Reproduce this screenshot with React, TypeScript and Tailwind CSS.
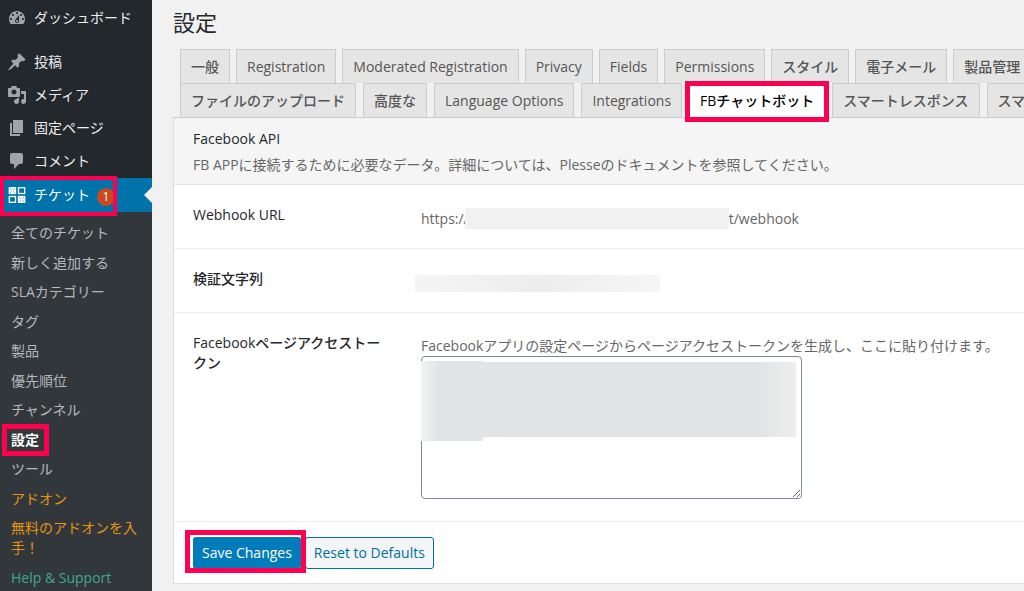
import type { ReactNode } from 'react'

const ICONS = {
  dashboard:
    'M3.76 16h12.48c1.1-1.37 1.76-3.11 1.76-5 0-4.42-3.58-8-8-8s-8 3.58-8 8c0 1.89.66 3.63 1.76 5zM10 4c.55 0 1 .45 1 1s-.45 1-1 1-1-.45-1-1 .45-1 1-1zM6 6c.55 0 1 .45 1 1s-.45 1-1 1-1-.45-1-1 .45-1 1-1zm8 0c.55 0 1 .45 1 1s-.45 1-1 1-1-.45-1-1 .45-1 1-1zm-5.37 5.55L12 7v6c0 1.1-.9 2-2 2s-2-.9-2-2c0-.57.24-1.08.63-1.45zM4 10c.55 0 1 .45 1 1s-.45 1-1 1-1-.45-1-1 .45-1 1-1zm12 0c.55 0 1 .45 1 1s-.45 1-1 1-1-.45-1-1 .45-1 1-1zm-5 3c0-.55-.45-1-1-1s-1 .45-1 1 .45 1 1 1 1-.45 1-1z',
  post: 'M10.44 3.02l1.82-1.82 6.36 6.35-1.83 1.82c-1.05-.68-2.48-.57-3.41.36l-.75.75c-.92.93-1.04 2.35-.35 3.41l-1.83 1.82-2.41-2.41-2.8 2.79c-.42.42-3.38 2.71-3.8 2.29s1.86-3.39 2.28-3.81l2.79-2.79L4.1 9.36l1.83-1.82c1.05.69 2.48.57 3.4-.36l.75-.75c.93-.92 1.05-2.35.36-3.41z',
  media:
    'M13 11V4c0-.55-.45-1-1-1h-1.67L9 1H5L3.67 3H2c-.55 0-1 .45-1 1v7c0 .55.45 1 1 1h10c.55 0 1-.45 1-1zM7 4.5c1.38 0 2.5 1.12 2.5 2.5S8.38 9.5 7 9.5 4.5 8.38 4.5 7 5.62 4.5 7 4.5zM14 6h5v10.5c0 1.38-1.12 2.5-2.5 2.5S14 17.88 14 16.5s1.12-2.5 2.5-2.5c.17 0 .34.02.5.05V9h-3V6zm-4 8.05V13h2v3.5c0 1.38-1.12 2.5-2.5 2.5S7 17.88 7 16.5 8.12 14 9.5 14c.17 0 .34.02.5.05z',
  page: 'M6 15V2h10v13H6zm-1 1h8v2H3V5h2v11z',
  comment: 'M5 2h9c1.1 0 2 .9 2 2v7c0 1.1-.9 2-2 2h-2l-5 5v-5H5c-1.1 0-2-.9-2-2V4c0-1.1.9-2 2-2z',
}

const MENU: { label: string; icon: keyof typeof ICONS }[] = [
  { label: '投稿', icon: 'post' },
  { label: 'メディア', icon: 'media' },
  { label: '固定ページ', icon: 'page' },
  { label: 'コメント', icon: 'comment' },
]

const SUBMENU: { label: string; tone?: string; current?: boolean }[] = [
  { label: '全てのチケット' },
  { label: '新しく追加する' },
  { label: 'SLAカテゴリー' },
  { label: 'タグ' },
  { label: '製品' },
  { label: '優先順位' },
  { label: 'チャンネル' },
  { label: '設定', tone: 'text-white font-bold', current: true },
  { label: 'ツール' },
  { label: 'アドオン', tone: 'text-[#e8950c]' },
  { label: '無料のアドオンを入手！', tone: 'text-[#e8950c]' },
  { label: 'Help & Support', tone: 'text-[#42a88c]' },
]

const TAB_ROWS = [
  {
    gap: 'gap-1.5',
    tabs: ['一般', 'Registration', 'Moderated Registration', 'Privacy', 'Fields', 'Permissions', 'スタイル', '電子メール', '製品管理'],
  },
  {
    gap: 'gap-[7px]',
    tabs: ['ファイルのアップロード', '高度な', 'Language Options', 'Integrations', 'FBチャットボット', 'スマートレスポンス', 'スマートリプライ'],
  },
]

const ACTIVE_TAB = 'FBチャットボット'

function MenuIcon({ name }: { name: keyof typeof ICONS }) {
  return (
    <svg viewBox="0 0 20 20" className="size-5 flex-none fill-[#a0a5aa]" aria-hidden="true">
      <path d={ICONS[name]} />
    </svg>
  )
}

function TicketIcon() {
  return (
    <svg viewBox="0 0 20 20" className="size-5 flex-none" fill="none" stroke="#fff" strokeWidth="1.3" aria-hidden="true">
      <rect x="2.3" y="2.7" width="6.2" height="5.8" fill="#fff" />
      <rect x="11.5" y="2.7" width="6.2" height="5.8" />
      <rect x="2.3" y="11.500" width="6.2" height="5.8" />
      <rect x="11.5" y="11.500" width="6.2" height="5.8" fill="#fff" />
      <path
        d="M3.2 3.600l1.300 1.200M7.600 3.600L6.300 4.800M3.200 7.600l1.300-1.200M7.600 7.600L6.300 6.400M12.400 12.400l1.300 1.200M16.800 12.400l-1.300 1.200M12.400 16.400l1.300-1.200M16.800 16.400l-1.300-1.200"
        stroke="#0073aa"
        strokeWidth=".8"
      />
    </svg>
  )
}

function Highlight({ className }: { className: string }) {
  return <span aria-hidden="true" className={`pointer-events-none absolute z-10 border-[#ff0050] ${className}`} />
}

function MenuItem({ label, icon }: { label: string; icon: keyof typeof ICONS }) {
  return (
    <li>
      <a href="#" className="flex h-[33px] items-center gap-[7px] pl-[7px] text-[#eee]">
        <MenuIcon name={icon} />
        {label}
      </a>
    </li>
  )
}

function Sidebar() {
  return (
    <nav className="flex w-[152px] flex-none flex-col bg-[#23282d] pt-px">
      <ul>
        <MenuItem label="ダッシュボード" icon="dashboard" />
      </ul>
      <ul className="mb-px mt-[11px]">
        {MENU.map(item => (
          <MenuItem key={item.label} {...item} />
        ))}
      </ul>
      <div className="relative">
        <a href="#" className="flex h-[34px] items-center gap-[7px] bg-[#0073aa] pl-[7px] text-white">
          <TicketIcon />
          チケット
          <span className="mt-1 flex size-[18px] items-center justify-center rounded-full bg-[#ca4a1f] text-xs">1</span>
        </a>
        <svg viewBox="0 0 8 16" className="absolute right-0 top-[9px] h-4 w-2 fill-[#f1f1f1]" aria-hidden="true">
          <path d="M8 0v16L0 8z" />
        </svg>
        <Highlight className="-top-0.5 left-0 h-10 w-[117px] border-4" />
      </div>
      <ul className="flex flex-1 flex-col justify-between bg-[#32373c] pb-[3px] pl-[11px] pr-2 pt-[11px]">
        {SUBMENU.map(item => (
          <li key={item.label} className="relative">
            <a href="#" className={`block ${item.tone ?? 'text-[#b4b9be]'}`} aria-current={item.current ? 'page' : undefined}>
              {item.label}
            </a>
            {item.current && <Highlight className="-left-[9px] -top-1.5 h-8 w-[47px] border-[5px]" />}
          </li>
        ))}
      </ul>
    </nav>
  )
}

function Tab({ label }: { label: string }) {
  const active = label === ACTIVE_TAB
  return (
    <a
      href="#"
      aria-current={active ? 'page' : undefined}
      className={`relative flex-none whitespace-nowrap border border-b-0 border-[#ccc] px-2.5 pb-1.5 pt-[7px] font-medium leading-5 ${
        active ? 'bg-white text-black' : 'bg-[#e5e5e5] text-[#555]'
      }`}
    >
      {label}
      {active && <Highlight className="-inset-x-[5px] -bottom-[5px] -top-[3px] border-[5px]" />}
    </a>
  )
}

function SettingRow({ label, htmlFor, tall, children }: { label: string; htmlFor?: string; tall?: boolean; children?: ReactNode }) {
  return (
    <div className={`flex border-b border-[#eee] px-[19px] ${tall ? 'h-[209px]' : 'h-16'}`}>
      <div className="w-[228px] flex-none pr-8 pt-5 font-medium text-[#23282d]">
        {htmlFor ? <label htmlFor={htmlFor}>{label}</label> : label}
      </div>
      <div className="min-w-0 flex-1 pt-[23px] text-[#666]">{children}</div>
    </div>
  )
}

export default function App() {
  return (
    <div className="flex min-h-screen overflow-hidden bg-[#f1f1f1] font-['Open_Sans','Noto_Sans_CJK_JP',sans-serif] text-sm leading-5">
      <Sidebar />
      <main className="min-w-0 flex-1 overflow-hidden pl-[21px]">
        <h1 className="pt-1.5 text-[22px] leading-8 text-[#23282d]">設定</h1>
        <div className="mt-[11px] pl-[7px]">
          {TAB_ROWS.map(row => (
            <div key={row.gap} className={`flex ${row.gap}`}>
              {row.tabs.map(label => (
                <Tab key={label} label={label} />
              ))}
            </div>
          ))}
        </div>

        <form className="border border-r-0 border-[#ddd] border-t-[#ccc] bg-white" onSubmit={e => e.preventDefault()}>
          <header className="h-[67px] border-b border-[#e5e5e5] bg-[#f5f5f5] px-[19px] pt-[11px]">
            <h2 className="font-medium text-[#23282d]">Facebook API</h2>
            <p className="mt-1.5 whitespace-nowrap text-[#666]">
              FB APPに接続するために必要なデータ。詳細については、Plesseのドキュメントを参照してください。
            </p>
          </header>

          <SettingRow label="Webhook URL">
            <span className="flex items-center">
              https://
              <span className="-ml-1 h-[21px] w-[264px] bg-[#f1f1f1]" />
              t/webhook
            </span>
          </SettingRow>
          <SettingRow label="検証文字列">
            <div className="-ml-1.5 mt-[3px] h-[17px] w-[245px] bg-linear-to-r from-[#f5f5f5] via-[#ededed] to-[#f6f6f6]" />
          </SettingRow>
          <SettingRow label="Facebookページアクセストークン" htmlFor="token" tall>
            <p className="whitespace-nowrap">Facebookアプリの設定ページからページアクセストークンを生成し、ここに貼り付けます。</p>
            <div className="relative w-[381px]">
              <textarea id="token" className="block h-[143px] w-full rounded border border-[#7e8993] bg-white p-2" />
              <div className="pointer-events-none absolute left-0 top-1.5 h-[75px] w-[375px] bg-linear-to-r from-[#e2e3e4] from-90% to-[#eeeeee]" />
              <div className="pointer-events-none absolute left-0 top-[5px] h-20 w-[62px] bg-linear-to-r from-[#f1f2f3] to-[#e2e3e4] to-30%" />
            </div>
          </SettingRow>

          <div className="flex gap-1 px-[19px] pb-3.5 pt-[15px]">
            <div className="relative">
              <button type="submit" className="h-8 rounded-[3px] bg-[#007cba] px-[9px] text-white">
                Save Changes
              </button>
              <Highlight className="-bottom-1 -left-2 -right-[5px] -top-[7px] border-[5px]" />
            </div>
            <button type="reset" className="h-8 rounded-[3px] border border-[#0071a1] bg-[#f3f5f6] px-2 text-[#0071a1]">
              Reset to Defaults
            </button>
          </div>
        </form>
      </main>
    </div>
  )
}
